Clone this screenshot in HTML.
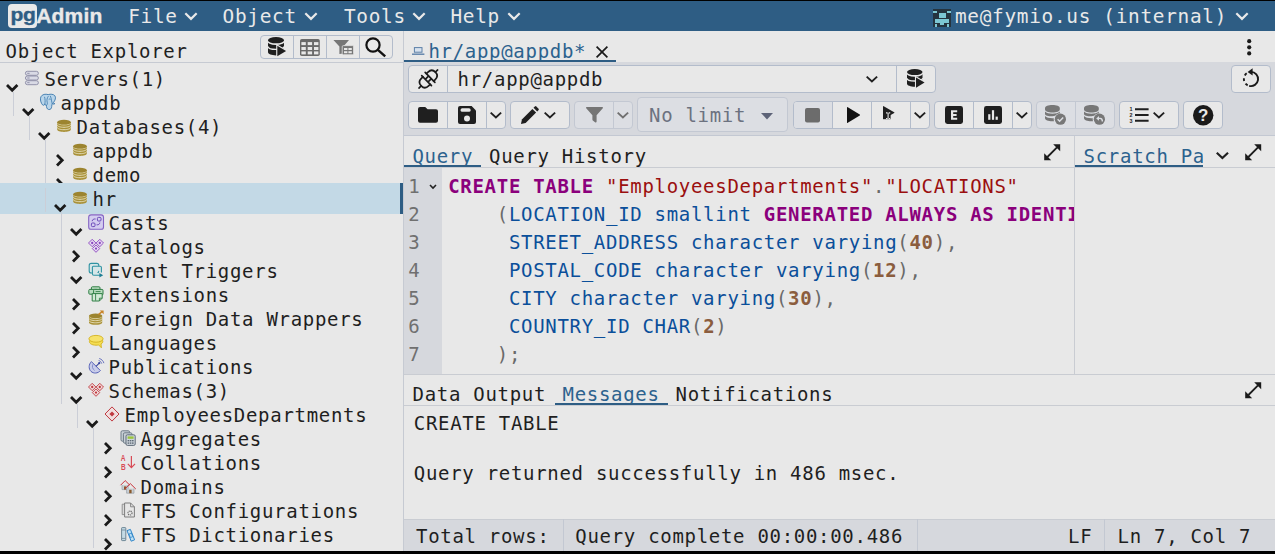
<!DOCTYPE html>
<html lang="en"><head><meta charset="utf-8"><title>pgAdmin 4</title>
<style>
*{box-sizing:border-box;margin:0;padding:0}
html,body{width:1275px;height:554px;overflow:hidden;background:#000}
body{position:relative;font-family:"DejaVu Sans Mono", "Liberation Mono", monospace;font-size:19px;letter-spacing:0.7px;color:#1f1f1f;line-height:1}
.abs{position:absolute}
.t{position:absolute;white-space:pre;line-height:24px;height:24px}
#hdr{position:absolute;left:0;top:1px;width:1275px;height:30px;background:#2e5d84}
#main{position:absolute;left:0;top:31px;width:1275px;height:520px;background:#e8e8e8}
.hm{position:absolute;top:1px;color:#e9e9e9;font-size:19.4px;letter-spacing:0.69px;white-space:pre;line-height:30px;height:30px}
svg{position:absolute;overflow:visible}
.vline{position:absolute;width:1px;background:#cbced7}
.hline{position:absolute;height:1px;background:#c9ccd2}
.btn{position:absolute;background:#e8e8e8;border:1px solid #b3bccb;border-radius:4px}
.btn.dis{background:#dcdee3;border-color:#c3c8d2}
.bdiv{position:absolute;width:1px;background:#b3bccb}
.kw{color:#8b007c;font-weight:bold}
.st{color:#9b0f0f}
.id{color:#0b4f9a}
.nu{color:#8b5d3e;font-weight:bold}
.pu{color:#6a6a6a}
</style></head>
<body>
<div id="hdr">
<div class="abs" style="left:7.7px;top:3px;width:29.5px;height:24px;background:#e9e9e9;border-radius:4px"></div>
<div class="abs" style="left:10.6px;top:0.5px;font-family:'Liberation Sans',sans-serif;font-weight:bold;font-size:21px;letter-spacing:-0.4px;line-height:26px;color:#2e5d84;white-space:pre;transform:scaleY(0.91);transform-origin:0 8px;-webkit-text-stroke:0.4px #2e5d84">pg</div>
<div class="abs" style="left:36.2px;top:1.6px;-webkit-text-stroke:0.35px #e9e9e9;font-family:'Liberation Sans',sans-serif;font-weight:bold;font-size:21px;letter-spacing:0.2px;line-height:26px;color:#e9e9e9;white-space:pre">Admin</div>
<div class="hm" style="left:128.2px">File</div>
<svg style="left:184.5px;top:12.4px" width="12" height="7" viewBox="0 0 12 7"><path d="M1.1 1.1 L6 5.9 L10.9 1.1" fill="none" stroke="#e9e9e9" stroke-width="2.2" stroke-linecap="square" stroke-linejoin="miter"/></svg>
<div class="hm" style="left:222.6px">Object</div>
<svg style="left:305.0px;top:12.4px" width="12" height="7" viewBox="0 0 12 7"><path d="M1.1 1.1 L6 5.9 L10.9 1.1" fill="none" stroke="#e9e9e9" stroke-width="2.2" stroke-linecap="square" stroke-linejoin="miter"/></svg>
<div class="hm" style="left:344px">Tools</div>
<svg style="left:413.0px;top:12.4px" width="12" height="7" viewBox="0 0 12 7"><path d="M1.1 1.1 L6 5.9 L10.9 1.1" fill="none" stroke="#e9e9e9" stroke-width="2.2" stroke-linecap="square" stroke-linejoin="miter"/></svg>
<div class="hm" style="left:450.5px">Help</div>
<svg style="left:508.0px;top:12.4px" width="12" height="7" viewBox="0 0 12 7"><path d="M1.1 1.1 L6 5.9 L10.9 1.1" fill="none" stroke="#e9e9e9" stroke-width="2.2" stroke-linecap="square" stroke-linejoin="miter"/></svg>
<div class="hm" style="left:955px">me@fymio.us (internal)</div>
<svg style="left:1236.0px;top:12.4px" width="12" height="7" viewBox="0 0 12 7"><path d="M1.1 1.1 L6 5.9 L10.9 1.1" fill="none" stroke="#e9e9e9" stroke-width="2.2" stroke-linecap="square" stroke-linejoin="miter"/></svg>
<svg style="left:933px;top:8px" width="18" height="18" viewBox="0 0 18 18" shape-rendering="crispEdges"><rect width="18" height="18" fill="#25343f"/><g fill="#7cc6d2"><rect x="0" y="2" width="4" height="1.5"/><rect x="14" y="2" width="4" height="1.5"/><rect x="5.5" y="3.5" width="7" height="5.5"/><rect x="2" y="9.5" width="14" height="4"/><rect x="7" y="13.5" width="4" height="2.5"/><rect x="2" y="14.5" width="2" height="3.5"/><rect x="14" y="14.5" width="2" height="3.5"/></g></svg>
</div>
<div id="main"></div>
<div class="t " style="left:5.50px;top:39.03px;">Object Explorer</div>
<div class="hline" style="left:0;top:62px;width:404px;background:#c6cad2"></div>
<div class="vline" style="left:403px;top:31px;height:520px;background:#c6cad2"></div>
<div class="btn" style="left:260px;top:35px;width:133px;height:24px"></div>
<div class="bdiv" style="left:293px;top:36px;height:22px"></div>
<div class="bdiv" style="left:326px;top:36px;height:22px"></div>
<div class="bdiv" style="left:359px;top:36px;height:22px"></div>
<div class="abs" style="left:0;top:63px;width:403px;height:488px;overflow:hidden">
<svg style="left:5.8px;top:20.7px" width="12.4" height="8.2" viewBox="0 0 12.4 8.2"><path d="M0.99 0.99L6.2 6.2L11.41 0.99" fill="none" stroke="#1a1a1a" stroke-width="2.8"/></svg>
<svg style="left:24px;top:7px" width="16" height="16" viewBox="0 0 16 16"><rect x="1.4" y="1.3" width="13" height="4" rx="2" fill="#d9dae5" stroke="#8a8aa4" stroke-width="0.9"/><rect x="3.2" y="2.85" width="2.4" height="0.9" fill="#8a8aa4"/><rect x="1.4" y="6" width="13" height="4" rx="2" fill="#d9dae5" stroke="#8a8aa4" stroke-width="0.9"/><rect x="3.2" y="7.55" width="2.4" height="0.9" fill="#8a8aa4"/><rect x="1.4" y="10.7" width="13" height="4" rx="2" fill="#d9dae5" stroke="#8a8aa4" stroke-width="0.9"/><rect x="3.2" y="12.25" width="2.4" height="0.9" fill="#8a8aa4"/></svg>
<div class="t " style="left:44.60px;top:4.03px;">Servers(1)</div>
<div class="vline" style="left:13px;top:29px;height:24px"></div>
<svg style="left:21.8px;top:44.7px" width="12.4" height="8.2" viewBox="0 0 12.4 8.2"><path d="M0.99 0.99L6.2 6.2L11.41 0.99" fill="none" stroke="#1a1a1a" stroke-width="2.8"/></svg>
<svg style="left:40px;top:31px" width="16" height="16" viewBox="0 0 16 16"><path d="M8.2 0.6C5.6 -0.2 2.2 0.2 0.9 2.8C-0.2 5.2 0.9 9.2 2.6 10.9C3.6 11.8 4.6 11 4.9 9.9C5.2 11 5.8 11.6 6.5 11.4C6.4 13 6.8 15.2 8.6 15.5C10.6 15.8 11.6 14.6 11.7 12.4C11.8 11.2 12 10.2 12.2 9.6C13 10.4 14.4 10.2 15 9.4C13.9 9.6 13.3 9.3 13.3 8.7C15.3 6.4 16.2 3.4 14.8 1.7C13.4 0.1 10.6 -0.1 8.2 0.6Z" fill="#b9d5ea" stroke="#3b78ad" stroke-width="0.9" stroke-linejoin="round"/><path d="M4.9 9.9C5.3 7.6 5.2 5.2 4.6 3.2M6.5 11.4C7.4 10.6 7.6 9.4 7.2 8.2C6.6 6.4 7 4 8.2 2.4M12.2 9.6C11.4 7.8 11.6 4.6 10.4 2.2M9 5.2C9.4 4.8 10 4.9 10.2 5.3" fill="none" stroke="#3b78ad" stroke-width="0.8" stroke-linecap="round"/></svg>
<div class="t " style="left:60.60px;top:28.03px;">appdb</div>
<div class="vline" style="left:29px;top:53px;height:24px"></div>
<svg style="left:37.8px;top:68.7px" width="12.4" height="8.2" viewBox="0 0 12.4 8.2"><path d="M0.99 0.99L6.2 6.2L11.41 0.99" fill="none" stroke="#1a1a1a" stroke-width="2.8"/></svg>
<svg style="left:56px;top:55px" width="16" height="16" viewBox="0 0 16 16"><path d="M1.2 4.2V11.6C1.2 13 4.3 14 8 14S14.8 13 14.8 11.6V4.2Z" fill="#a99138"/><path d="M1.2 4.4C1.2 5.8 4.3 6.9 8 6.9S14.8 5.8 14.8 4.4M1.2 6.9C1.2 8.3 4.3 9.3 8 9.3S14.8 8.3 14.8 6.9M1.2 9.3C1.2 10.7 4.3 11.7 8 11.7S14.8 10.7 14.8 9.3" fill="none" stroke="#e9e3c3" stroke-width="0.9"/><ellipse cx="8" cy="4.2" rx="6.8" ry="2.4" fill="#9c842f"/></svg>
<div class="t " style="left:76.60px;top:52.03px;">Databases(4)</div>
<div class="vline" style="left:45px;top:77px;height:24px"></div>
<svg style="left:55.9px;top:90.7px" width="8.2" height="12.4" viewBox="0 0 8.2 12.4"><path d="M0.99 0.99L6.2 6.2L0.99 11.41" fill="none" stroke="#1a1a1a" stroke-width="2.8"/></svg>
<svg style="left:72px;top:79px" width="16" height="16" viewBox="0 0 16 16"><path d="M1.2 4.2V11.6C1.2 13 4.3 14 8 14S14.8 13 14.8 11.6V4.2Z" fill="#a99138"/><path d="M1.2 4.4C1.2 5.8 4.3 6.9 8 6.9S14.8 5.8 14.8 4.4M1.2 6.9C1.2 8.3 4.3 9.3 8 9.3S14.8 8.3 14.8 6.9M1.2 9.3C1.2 10.7 4.3 11.7 8 11.7S14.8 10.7 14.8 9.3" fill="none" stroke="#e9e3c3" stroke-width="0.9"/><ellipse cx="8" cy="4.2" rx="6.8" ry="2.4" fill="#9c842f"/></svg>
<div class="t " style="left:92.60px;top:76.03px;">appdb</div>
<div class="vline" style="left:45px;top:101px;height:24px"></div>
<svg style="left:55.9px;top:114.7px" width="8.2" height="12.4" viewBox="0 0 8.2 12.4"><path d="M0.99 0.99L6.2 6.2L0.99 11.41" fill="none" stroke="#1a1a1a" stroke-width="2.8"/></svg>
<svg style="left:72px;top:103px" width="16" height="16" viewBox="0 0 16 16"><path d="M1.2 4.2V11.6C1.2 13 4.3 14 8 14S14.8 13 14.8 11.6V4.2Z" fill="#a99138"/><path d="M1.2 4.4C1.2 5.8 4.3 6.9 8 6.9S14.8 5.8 14.8 4.4M1.2 6.9C1.2 8.3 4.3 9.3 8 9.3S14.8 8.3 14.8 6.9M1.2 9.3C1.2 10.7 4.3 11.7 8 11.7S14.8 10.7 14.8 9.3" fill="none" stroke="#e9e3c3" stroke-width="0.9"/><ellipse cx="8" cy="4.2" rx="6.8" ry="2.4" fill="#9c842f"/></svg>
<div class="t " style="left:92.60px;top:100.03px;">demo</div>
<div class="abs" style="left:0;top:120px;width:403px;height:31px;background:#c3d9e6"></div>
<div class="abs" style="left:400px;top:120px;width:3px;height:31px;background:#2e5d84"></div>
<div class="vline" style="left:45px;top:125px;height:24px"></div>
<svg style="left:53.8px;top:140.7px" width="12.4" height="8.2" viewBox="0 0 12.4 8.2"><path d="M0.99 0.99L6.2 6.2L11.41 0.99" fill="none" stroke="#1a1a1a" stroke-width="2.8"/></svg>
<svg style="left:72px;top:127px" width="16" height="16" viewBox="0 0 16 16"><path d="M1.2 4.2V11.6C1.2 13 4.3 14 8 14S14.8 13 14.8 11.6V4.2Z" fill="#a99138"/><path d="M1.2 4.4C1.2 5.8 4.3 6.9 8 6.9S14.8 5.8 14.8 4.4M1.2 6.9C1.2 8.3 4.3 9.3 8 9.3S14.8 8.3 14.8 6.9M1.2 9.3C1.2 10.7 4.3 11.7 8 11.7S14.8 10.7 14.8 9.3" fill="none" stroke="#e9e3c3" stroke-width="0.9"/><ellipse cx="8" cy="4.2" rx="6.8" ry="2.4" fill="#9c842f"/></svg>
<div class="t " style="left:92.60px;top:124.03px;">hr</div>
<div class="vline" style="left:61px;top:149px;height:24px"></div>
<svg style="left:69.8px;top:164.7px" width="12.4" height="8.2" viewBox="0 0 12.4 8.2"><path d="M0.99 0.99L6.2 6.2L11.41 0.99" fill="none" stroke="#1a1a1a" stroke-width="2.8"/></svg>
<svg style="left:88px;top:151px" width="16" height="16" viewBox="0 0 16 16"><rect x="0.7" y="0.9" width="14.8" height="14.4" rx="2.4" fill="#d4cdf0" stroke="#8363c4" stroke-width="1.1"/><rect x="9.4" y="3.4" width="3.6" height="3.6" rx="1" fill="none" stroke="#6a48b8" stroke-width="1"/><rect x="3.4" y="9" width="3.6" height="3.6" rx="1" fill="none" stroke="#6a48b8" stroke-width="1"/><path d="M4.2 7.2C4.4 5.4 5.6 4.8 7.6 5M11.8 8.6C11.6 10.4 10.4 11 8.6 10.8" fill="none" stroke="#6a48b8" stroke-width="1"/></svg>
<div class="t " style="left:108.60px;top:148.03px;">Casts</div>
<div class="vline" style="left:61px;top:173px;height:24px"></div>
<svg style="left:71.9px;top:186.7px" width="8.2" height="12.4" viewBox="0 0 8.2 12.4"><path d="M0.99 0.99L6.2 6.2L0.99 11.41" fill="none" stroke="#1a1a1a" stroke-width="2.8"/></svg>
<svg style="left:88px;top:175px" width="16" height="16" viewBox="0 0 16 16"><path d="M4.2 1.3L7.9 5L4.2 8.7L0.5 5Z" fill="#e6d8f2" stroke="#8b46c0" stroke-width="0.9"/><circle cx="4.2" cy="5" r="1.15" fill="#8b46c0"/><path d="M11.8 1.3L15.5 5L11.8 8.7L8.1 5Z" fill="#e6d8f2" stroke="#8b46c0" stroke-width="0.9"/><circle cx="11.8" cy="5" r="1.15" fill="#8b46c0"/><path d="M8 6.9L11.7 10.6L8 14.3L4.3 10.6Z" fill="#e6d8f2" stroke="#8b46c0" stroke-width="0.9"/><circle cx="8" cy="10.6" r="1.15" fill="#8b46c0"/></svg>
<div class="t " style="left:108.60px;top:172.03px;">Catalogs</div>
<div class="vline" style="left:61px;top:197px;height:24px"></div>
<svg style="left:69.8px;top:212.7px" width="12.4" height="8.2" viewBox="0 0 12.4 8.2"><path d="M0.99 0.99L6.2 6.2L11.41 0.99" fill="none" stroke="#1a1a1a" stroke-width="2.8"/></svg>
<svg style="left:88px;top:199px" width="16" height="16" viewBox="0 0 16 16"><rect x="1.2" y="1.4" width="9.6" height="9.6" rx="2" fill="#d6e6e8" stroke="#2f93a3" stroke-width="1.1"/><path d="M4.4 5.2Q4.4 4.2 5.4 4.2H12.2Q13.4 4.2 13.4 5.4V10.4M4.4 5.2V11.8Q4.4 13.2 5.8 13.2H12" fill="#d6e6e8" stroke="#2f93a3" stroke-width="1.1"/><path d="M11.4 11L15.2 13.2L11.4 15.4Z" fill="#1f7f95"/></svg>
<div class="t " style="left:108.60px;top:196.03px;">Event Triggers</div>
<div class="vline" style="left:61px;top:221px;height:24px"></div>
<svg style="left:71.9px;top:234.7px" width="8.2" height="12.4" viewBox="0 0 8.2 12.4"><path d="M0.99 0.99L6.2 6.2L0.99 11.41" fill="none" stroke="#1a1a1a" stroke-width="2.8"/></svg>
<svg style="left:88px;top:223px" width="16" height="16" viewBox="0 0 16 16"><rect x="3.4" y="0.8" width="8.6" height="4.6" rx="1" fill="#b9dcc0" stroke="#2f7f45" stroke-width="1"/><rect x="0.8" y="3.4" width="8.6" height="4.8" rx="1" fill="#b9dcc0" stroke="#2f7f45" stroke-width="1"/><rect x="5.6" y="3.4" width="9.4" height="5.6" rx="1" fill="#b9dcc0" stroke="#2f7f45" stroke-width="1"/><path d="M4.2 7.6H14.2V12.2L11.4 15H4.2Z" fill="#d3ead7" stroke="#2f7f45" stroke-width="1" stroke-linejoin="round"/><path d="M7.6 5.6H12.6M7.6 7.8V14.6M11.4 15V12.2H14.2" fill="none" stroke="#2f7f45" stroke-width="0.9"/></svg>
<div class="t " style="left:108.60px;top:220.03px;">Extensions</div>
<div class="vline" style="left:61px;top:245px;height:24px"></div>
<svg style="left:71.9px;top:258.7px" width="8.2" height="12.4" viewBox="0 0 8.2 12.4"><path d="M0.99 0.99L6.2 6.2L0.99 11.41" fill="none" stroke="#1a1a1a" stroke-width="2.8"/></svg>
<svg style="left:88px;top:247px" width="16" height="16" viewBox="0 0 16 16"><path d="M1 5.8V12.4C1 13.8 4 14.8 7.6 14.8S14.2 13.8 14.2 12.4V5.8Z" fill="#a99138"/><path d="M1 6C1 7.4 4 8.4 7.6 8.4S14.2 7.4 14.2 6M1 8.3C1 9.7 4 10.6 7.6 10.6S14.2 9.7 14.2 8.3M1 10.5C1 11.9 4 12.8 7.6 12.8S14.2 11.9 14.2 10.5" fill="none" stroke="#e9e3c3" stroke-width="0.85"/><ellipse cx="7.6" cy="5.8" rx="6.6" ry="2.3" fill="#9c842f"/><path d="M10.4 4.6L14.4 1.4" stroke="#c98528" stroke-width="1.4"/><path d="M11.8 0.4H15.6V4.2Z" fill="#c98528"/></svg>
<div class="t " style="left:108.60px;top:244.03px;">Foreign Data Wrappers</div>
<div class="vline" style="left:61px;top:269px;height:24px"></div>
<svg style="left:71.9px;top:282.7px" width="8.2" height="12.4" viewBox="0 0 8.2 12.4"><path d="M0.99 0.99L6.2 6.2L0.99 11.41" fill="none" stroke="#1a1a1a" stroke-width="2.8"/></svg>
<svg style="left:88px;top:271px" width="16" height="16" viewBox="0 0 16 16"><path d="M1.6 6.6C0.6 9 3.4 11.2 8 11.2C9 11.2 9.8 11.1 10.6 10.9L13.4 13.8L13 10C14.8 9 15.2 7.6 14.6 6.4Z" fill="#f4dd52" stroke="#d4b21f" stroke-width="0.9" stroke-linejoin="round"/><ellipse cx="8" cy="4.8" rx="7.1" ry="3.4" fill="#f6e26a" stroke="#d4b21f" stroke-width="0.9"/></svg>
<div class="t " style="left:108.60px;top:268.03px;">Languages</div>
<div class="vline" style="left:61px;top:293px;height:24px"></div>
<svg style="left:69.8px;top:308.7px" width="12.4" height="8.2" viewBox="0 0 12.4 8.2"><path d="M0.99 0.99L6.2 6.2L11.41 0.99" fill="none" stroke="#1a1a1a" stroke-width="2.8"/></svg>
<svg style="left:88px;top:295px" width="16" height="16" viewBox="0 0 16 16"><path d="M3.4 3.6C0.6 6.4 0.4 10.8 3 13.4C5.6 15.8 9.8 15.6 12.4 12.6Z" fill="#c9cdea" stroke="#5762b8" stroke-width="1" stroke-linejoin="round"/><path d="M5 6.2C3.8 8.2 4.4 11 6.6 12.4" fill="none" stroke="#7a83c8" stroke-width="0.9"/><path d="M8 8.4L11 5.4" stroke="#3a45a0" stroke-width="1.1"/><circle cx="11.2" cy="5.2" r="1.1" fill="#3a45a0"/><path d="M11 2.6C12.2 3 13.2 4 13.6 5.2M11.6 0.6C13.6 1.2 15.2 2.8 15.8 4.8" fill="none" stroke="#5762b8" stroke-width="0.9" stroke-linecap="round"/></svg>
<div class="t " style="left:108.60px;top:292.03px;">Publications</div>
<div class="vline" style="left:61px;top:317px;height:24px"></div>
<svg style="left:69.8px;top:332.7px" width="12.4" height="8.2" viewBox="0 0 12.4 8.2"><path d="M0.99 0.99L6.2 6.2L11.41 0.99" fill="none" stroke="#1a1a1a" stroke-width="2.8"/></svg>
<svg style="left:88px;top:319px" width="16" height="16" viewBox="0 0 16 16"><path d="M4.2 1.3L7.9 5L4.2 8.7L0.5 5Z" fill="#f0d8d8" stroke="#c0393f" stroke-width="0.9"/><circle cx="4.2" cy="5" r="1.15" fill="#c0393f"/><path d="M11.8 1.3L15.5 5L11.8 8.7L8.1 5Z" fill="#f0d8d8" stroke="#c0393f" stroke-width="0.9"/><circle cx="11.8" cy="5" r="1.15" fill="#c0393f"/><path d="M8 6.9L11.7 10.6L8 14.3L4.3 10.6Z" fill="#f0d8d8" stroke="#c0393f" stroke-width="0.9"/><circle cx="8" cy="10.6" r="1.15" fill="#c0393f"/></svg>
<div class="t " style="left:108.60px;top:316.03px;">Schemas(3)</div>
<div class="vline" style="left:77px;top:341px;height:24px"></div>
<svg style="left:85.8px;top:356.7px" width="12.4" height="8.2" viewBox="0 0 12.4 8.2"><path d="M0.99 0.99L6.2 6.2L11.41 0.99" fill="none" stroke="#1a1a1a" stroke-width="2.8"/></svg>
<svg style="left:104px;top:343px" width="16" height="16" viewBox="0 0 16 16"><path d="M8 0.9L15 8L8 15.1L1 8Z" fill="#f1dede" stroke="#c0393f" stroke-width="1"/><path d="M8 5.4L10.6 8L8 10.6L5.4 8Z" fill="#c0393f"/></svg>
<div class="t " style="left:124.60px;top:340.03px;">EmployeesDepartments</div>
<div class="vline" style="left:93px;top:365px;height:24px"></div>
<svg style="left:103.9px;top:378.7px" width="8.2" height="12.4" viewBox="0 0 8.2 12.4"><path d="M0.99 0.99L6.2 6.2L0.99 11.41" fill="none" stroke="#1a1a1a" stroke-width="2.8"/></svg>
<svg style="left:120px;top:367px" width="16" height="16" viewBox="0 0 16 16"><rect x="1" y="0.8" width="8.6" height="10.4" rx="1.4" fill="#c8d0d6" stroke="#6d7a86" stroke-width="1"/><rect x="3.4" y="2.8" width="8.6" height="10.4" rx="1.4" fill="#c8d0d6" stroke="#6d7a86" stroke-width="1"/><rect x="6" y="4.8" width="9.2" height="10.6" rx="1.4" fill="#cfd6dc" stroke="#5f6b78" stroke-width="1"/><rect x="7.6" y="6.4" width="6" height="2.4" fill="#9bc63c"/><g fill="#5f6b78"><rect x="7.6" y="10" width="1.6" height="1.4"/><rect x="9.8" y="10" width="1.6" height="1.4"/><rect x="12" y="10" width="1.6" height="1.4"/><rect x="7.6" y="12.4" width="1.6" height="1.4"/><rect x="9.8" y="12.4" width="1.6" height="1.4"/><rect x="12" y="12.4" width="1.6" height="1.4"/></g></svg>
<div class="t " style="left:140.60px;top:364.03px;">Aggregates</div>
<div class="vline" style="left:93px;top:389px;height:24px"></div>
<svg style="left:103.9px;top:402.7px" width="8.2" height="12.4" viewBox="0 0 8.2 12.4"><path d="M0.99 0.99L6.2 6.2L0.99 11.41" fill="none" stroke="#1a1a1a" stroke-width="2.8"/></svg>
<svg style="left:120px;top:391px" width="16" height="16" viewBox="0 0 16 16"><text x="1" y="7.2" font-family="'Liberation Sans',sans-serif" font-weight="bold" font-size="8.4" letter-spacing="0" fill="#d84a55" transform="scale(0.78 1)">A</text><text x="1.2" y="15.6" font-family="'Liberation Sans',sans-serif" font-weight="bold" font-size="8.4" letter-spacing="0" fill="#d84a55" transform="scale(0.78 1)">B</text><path d="M11.4 2V13.4M7.8 9.8L11.4 13.6L15 9.8" fill="none" stroke="#d84a55" stroke-width="1.2"/></svg>
<div class="t " style="left:140.60px;top:388.03px;">Collations</div>
<div class="vline" style="left:93px;top:413px;height:24px"></div>
<svg style="left:103.9px;top:426.7px" width="8.2" height="12.4" viewBox="0 0 8.2 12.4"><path d="M0.99 0.99L6.2 6.2L0.99 11.41" fill="none" stroke="#1a1a1a" stroke-width="2.8"/></svg>
<svg style="left:120px;top:415px" width="16" height="16" viewBox="0 0 16 16"><path d="M2 7V11.6H8.2V7" fill="#c9cfd4" stroke="#8a949c" stroke-width="0.6"/><path d="M0.6 7.2L5.2 2.6L9.8 7.2" fill="none" stroke="#c8323a" stroke-width="1"/><rect x="4" y="8.4" width="2.2" height="3.2" fill="#8a5a2b"/><path d="M6.6 10.6V15.2H14V10.6" fill="#c9cfd4" stroke="#8a949c" stroke-width="0.6"/><path d="M4.8 11L10.3 5.6L15.8 11" fill="none" stroke="#c8323a" stroke-width="1"/><rect x="9.2" y="11.8" width="2.4" height="3.4" fill="#8a5a2b"/></svg>
<div class="t " style="left:140.60px;top:412.03px;">Domains</div>
<div class="vline" style="left:93px;top:437px;height:24px"></div>
<svg style="left:103.9px;top:450.7px" width="8.2" height="12.4" viewBox="0 0 8.2 12.4"><path d="M0.99 0.99L6.2 6.2L0.99 11.41" fill="none" stroke="#1a1a1a" stroke-width="2.8"/></svg>
<svg style="left:120px;top:439px" width="16" height="16" viewBox="0 0 16 16"><path d="M2.2 2.2H7.4V12.6H2.2Z" fill="#d9d9d9" stroke="#8a8a8a" stroke-width="0.9"/><path d="M4.6 1H10.6L14.4 4.8V15H4.6Z" fill="#e6e6e6" stroke="#7d7d7d" stroke-width="1" stroke-linejoin="round"/><path d="M10.6 1V4.8H14.4" fill="none" stroke="#7d7d7d" stroke-width="0.9"/><circle cx="10" cy="11" r="2" fill="none" stroke="#6a6a6a" stroke-width="1.2" stroke-dasharray="1.1 0.7"/></svg>
<div class="t " style="left:140.60px;top:436.03px;">FTS Configurations</div>
<div class="vline" style="left:93px;top:461px;height:24px"></div>
<svg style="left:103.9px;top:474.7px" width="8.2" height="12.4" viewBox="0 0 8.2 12.4"><path d="M0.99 0.99L6.2 6.2L0.99 11.41" fill="none" stroke="#1a1a1a" stroke-width="2.8"/></svg>
<svg style="left:120px;top:463px" width="16" height="16" viewBox="0 0 16 16"><rect x="1.6" y="1.6" width="4.2" height="13" rx="0.6" fill="#c4dbe6" stroke="#6f8796" stroke-width="1"/><path d="M1.8 4H5.6M1.8 12.4H5.6" stroke="#6f8796" stroke-width="0.8"/><path d="M7 4.6L10.4 3.4L14.6 13.8L11.2 15.2Z" fill="#bfe0f4" stroke="#2f86c9" stroke-width="1" stroke-linejoin="round"/><path d="M9 8L11.4 7L12.8 10.6L10.4 11.6Z" fill="none" stroke="#2f86c9" stroke-width="0.8"/></svg>
<div class="t " style="left:140.60px;top:460.03px;">FTS Dictionaries</div>
</div>
<div class="abs" style="left:404px;top:31px;width:871px;height:31px;background:#e8e8e8"></div>
<div class="t " style="left:428.40px;top:38.63px;color:#2c628e">hr/app@appdb*</div>
<div class="abs" style="left:404px;top:59.6px;width:212px;height:2.2px;background:#2e5d84"></div>
<div class="abs" style="left:404px;top:62px;width:871px;height:74px;background:#d6d8dd"></div>
<div class="hline" style="left:404px;top:135px;width:871px;background:#c3c8d2"></div>
<div class="btn" style="left:408px;top:65px;width:528px;height:28px"></div>
<div class="bdiv" style="left:447px;top:66px;height:26px"></div>
<div class="bdiv" style="left:896px;top:66px;height:26px"></div>
<div class="t " style="left:457.60px;top:67.03px;">hr/app@appdb</div>
<div class="btn" style="left:1231px;top:65px;width:40px;height:28px"></div>
<div class="btn" style="left:408px;top:101px;width:98px;height:28px"></div>
<div class="bdiv" style="left:447px;top:102px;height:26px"></div>
<div class="bdiv" style="left:486px;top:102px;height:26px"></div>
<div class="btn" style="left:510px;top:101px;width:60px;height:28px"></div>
<div class="btn dis" style="left:574px;top:101px;width:59px;height:28px"></div>
<div class="bdiv" style="left:613px;top:102px;height:26px;background:#c3c8d2"></div>
<div class="btn dis" style="left:637px;top:97px;width:151px;height:35px"></div>
<div class="t " style="left:649.00px;top:102.93px;color:#6c7280">No limit</div>
<svg style="left:761px;top:112.5px" width="12" height="6.4" viewBox="0 0 12 6.4"><path d="M0 0H12L6 6.4Z" fill="#5d6378"/></svg>
<div class="btn" style="left:793px;top:101px;width:137px;height:28px"></div>
<div class="abs" style="left:794px;top:102px;width:38px;height:26px;background:#dcdee3;border-radius:3px 0 0 3px"></div>
<div class="bdiv" style="left:832px;top:102px;height:26px"></div>
<div class="bdiv" style="left:871px;top:102px;height:26px"></div>
<div class="bdiv" style="left:910px;top:102px;height:26px"></div>
<div class="btn" style="left:934px;top:101px;width:98px;height:28px"></div>
<div class="bdiv" style="left:973px;top:102px;height:26px"></div>
<div class="bdiv" style="left:1012px;top:102px;height:26px"></div>
<div class="btn dis" style="left:1036px;top:101px;width:79px;height:28px"></div>
<div class="bdiv" style="left:1075px;top:102px;height:26px;background:#c3c8d2"></div>
<div class="btn" style="left:1119px;top:101px;width:60px;height:28px"></div>
<div class="btn" style="left:1183px;top:101px;width:40px;height:28px"></div>
<svg style="left:268px;top:37.3px" width="18.2" height="19.6" viewBox="0 0 18.2 19.6"><path d="M0 3.15V15.3C0 17 3.6 18.4 8 18.4S16 17 16 15.3V3.15Z" fill="#1f1f1f"/><path d="M-0.3 9.3C0 11 3.6 12.4 8 12.4S16 11 16.3 9.3" fill="none" stroke="#e8e8e8" stroke-width="1.4"/><ellipse cx="8" cy="3.4" rx="9.4" ry="4.6" fill="#e8e8e8"/><ellipse cx="8" cy="3.15" rx="8" ry="3.15" fill="#1f1f1f"/><path d="M9.3 19.6L18.6 14V20Z" fill="#e8e8e8"/><path d="M9.3 8.8L18.1 14L9.3 19.3Z" fill="#1f1f1f" stroke="#e8e8e8" stroke-width="2.2" paint-order="stroke"/></svg>
<svg style="left:300.1px;top:39px" width="19.8" height="17" viewBox="0 0 19.8 17"><rect x="0" y="0" width="19.8" height="17" rx="1.8" fill="#6a6a6a"/><rect x="1.4" y="3.1" width="4.4" height="3" fill="#e8e8e8"/><rect x="7.7" y="3.1" width="4.4" height="3" fill="#e8e8e8"/><rect x="14" y="3.1" width="4.4" height="3" fill="#e8e8e8"/><rect x="1.4" y="8" width="4.4" height="3" fill="#e8e8e8"/><rect x="7.7" y="8" width="4.4" height="3" fill="#e8e8e8"/><rect x="14" y="8" width="4.4" height="3" fill="#e8e8e8"/><rect x="1.4" y="12.4" width="4.4" height="3" fill="#e8e8e8"/><rect x="7.7" y="12.4" width="4.4" height="3" fill="#e8e8e8"/><rect x="14" y="12.4" width="4.4" height="3" fill="#e8e8e8"/></svg>
<svg style="left:332.6px;top:39.6px" width="21" height="15" viewBox="0 0 21 15"><path d="M0.4 0H16L10.4 6.6V13.4L6.4 14V6.6Z" fill="#777"/><rect x="9.2" y="5.6" width="11.4" height="9.2" rx="1.2" fill="#777" stroke="#e8e8e8" stroke-width="0.8"/><g fill="#e8e8e8"><rect x="11" y="8" width="3.4" height="2"/><rect x="15.4" y="8" width="3.4" height="2"/><rect x="11" y="11.2" width="3.4" height="2"/><rect x="15.4" y="11.2" width="3.4" height="2"/></g></svg>
<svg style="left:365px;top:37px" width="21" height="20" viewBox="0 0 21 20"><circle cx="8" cy="8" r="6.6" fill="none" stroke="#111" stroke-width="2.2"/><path d="M12.6 12.6L20.2 19.4" stroke="#111" stroke-width="2.4"/></svg>
<svg style="left:411.6px;top:47px" width="12.4" height="8" viewBox="0 0 12.4 8"><rect x="2.4" y="0.6" width="7.6" height="4.6" fill="#d8e2ee" stroke="#5b7fa8" stroke-width="1"/><path d="M0 7.2H12.4" stroke="#5b7fa8" stroke-width="1.4"/></svg>
<svg style="left:596px;top:46px" width="12" height="12" viewBox="0 0 12 12"><path d="M0.6 0.6L11.4 11.4M11.4 0.6L0.6 11.4" stroke="#1a1a1a" stroke-width="1.7"/></svg>
<svg style="left:1246.7px;top:38.7px" width="4.4" height="16.6" viewBox="0 0 4.4 16.6"><circle cx="2.2" cy="2.2" r="2.1" fill="#1a1a1a"/><circle cx="2.2" cy="8.3" r="2.1" fill="#1a1a1a"/><circle cx="2.2" cy="14.4" r="2.1" fill="#1a1a1a"/></svg>
<svg style="left:417.7px;top:68.9px" width="20.6" height="20" viewBox="0 0 20.6 20"><g transform="translate(10.3 10) rotate(-44)" fill="none" stroke="#1a1a1a" stroke-width="1.7" stroke-linecap="round"><path d="M-2.4 -5.2H-4.6C-8 -5.2 -9.9 -3 -9.9 0C-9.9 3 -8 5.2 -4.6 5.2H-2.4"/><path d="M2.4 -5.2H4.6C8 -5.2 9.9 -3 9.9 0C9.9 3 8 5.2 4.6 5.2H2.4"/><path d="M-2.4 -7V7M2.4 -7V7M-2.4 -1.9H2.4M-2.4 1.9H2.4M-9.9 0H-13M9.9 0H13"/></g></svg>
<svg style="left:866.0px;top:76.0px" width="11.8" height="6.9" viewBox="0 0 11.8 6.9"><path d="M0.665 0.665 L5.9 5.57 L11.135 0.665" fill="none" stroke="#1f1f1f" stroke-width="1.9" stroke-linecap="butt" stroke-linejoin="miter"/></svg>
<svg style="left:907.2px;top:69.2px" width="17.654" height="19.012" viewBox="0 0 18.2 19.6"><path d="M0 3.15V15.3C0 17 3.6 18.4 8 18.4S16 17 16 15.3V3.15Z" fill="#1f1f1f"/><path d="M-0.3 9.3C0 11 3.6 12.4 8 12.4S16 11 16.3 9.3" fill="none" stroke="#e8e8e8" stroke-width="1.4"/><ellipse cx="8" cy="3.4" rx="9.4" ry="4.6" fill="#e8e8e8"/><ellipse cx="8" cy="3.15" rx="8" ry="3.15" fill="#1f1f1f"/><path d="M9.3 19.6L18.6 14V20Z" fill="#e8e8e8"/><path d="M9.3 8.8L18.1 14L9.3 19.3Z" fill="#1f1f1f" stroke="#e8e8e8" stroke-width="2.2" paint-order="stroke"/></svg>
<svg style="left:1241.1px;top:67px" width="20" height="22" viewBox="0 0 20 22"><path d="M10.00 4.90A7.1 7.1 0 1 1 8.16 18.86" fill="none" stroke="#1a1a1a" stroke-width="1.9"/><path d="M8.16 18.86A7.1 7.1 0 0 1 8.16 5.14" fill="none" stroke="#1a1a1a" stroke-width="1.9" stroke-dasharray="2.7 2.9" stroke-dashoffset="-1.6"/><path d="M6.6 4.9L11.6 1.3V8.5Z" fill="#1a1a1a"/></svg>
<svg style="left:418px;top:107px" width="20" height="16" viewBox="0 0 20 16"><path d="M2 0H7.2L9.6 2.2H18Q20 2.2 20 4.2V13.8Q20 15.8 18 15.8H2Q0 15.8 0 13.8V2Q0 0 2 0Z" fill="#1f1f1f"/></svg>
<svg style="left:458px;top:106px" width="18" height="18" viewBox="0 0 18 18"><path d="M2 0H13.6L18 4.4V16Q18 18 16 18H2Q0 18 0 16V2Q0 0 2 0Z" fill="#1f1f1f"/><rect x="2.6" y="2.2" width="10" height="3.6" rx="1.6" fill="#e8e8e8"/><circle cx="9" cy="12.6" r="3" fill="#e8e8e8"/></svg>
<svg style="left:490.1px;top:112.0px" width="11.8" height="6.9" viewBox="0 0 11.8 6.9"><path d="M0.665 0.665 L5.9 5.57 L11.135 0.665" fill="none" stroke="#1f1f1f" stroke-width="1.9" stroke-linecap="butt" stroke-linejoin="miter"/></svg>
<svg style="left:520.6px;top:106px" width="18" height="18" viewBox="0 0 18 18"><path d="M0 18L0.9 13.4L11.4 2.9L15.1 6.6L4.6 17.1Z" fill="#1f1f1f"/><path d="M12.5 1.8L13.9 0.4Q14.6 -0.2 15.3 0.4L17.6 2.7Q18.2 3.4 17.6 4.1L16.2 5.5Z" fill="#1f1f1f"/></svg>
<svg style="left:544.4px;top:112.0px" width="11.8" height="6.9" viewBox="0 0 11.8 6.9"><path d="M0.665 0.665 L5.9 5.57 L11.135 0.665" fill="none" stroke="#1f1f1f" stroke-width="1.9" stroke-linecap="butt" stroke-linejoin="miter"/></svg>
<svg style="left:585.5px;top:107px" width="17" height="16" viewBox="0 0 17 16"><path d="M0.6 0H16.4Q17.4 0.2 16.8 1.2L10.6 8.2V14.6Q10.4 15.8 9.4 15.4L6.8 13.6Q6.4 13.2 6.4 12.6V8.2L0.2 1.2Q-0.4 0.2 0.6 0Z" fill="#757575"/></svg>
<svg style="left:617.0px;top:112.0px" width="11.8" height="6.9" viewBox="0 0 11.8 6.9"><path d="M0.665 0.665 L5.9 5.57 L11.135 0.665" fill="none" stroke="#707070" stroke-width="1.9" stroke-linecap="butt" stroke-linejoin="miter"/></svg>
<svg style="left:805.4px;top:107.6px" width="15" height="15" viewBox="0 0 15 15"><rect width="15" height="14.6" rx="2" fill="#6c6c6c"/></svg>
<svg style="left:846.8px;top:107px" width="13.2" height="16" viewBox="0 0 13.2 16"><path d="M0 0.6Q0 -0.2 0.8 0.2L12.8 7.6Q13.4 8 12.8 8.4L0.8 15.8Q0 16.2 0 15.4Z" fill="#111"/></svg>
<svg style="left:882.5px;top:105.8px" width="11.8" height="13.4" viewBox="0 0 11.8 13.4"><path d="M0 0.5Q0 -0.2 0.7 0.2L11.2 6.2Q11.8 6.6 11.2 7L0.7 13Q0 13.4 0 12.7Z" fill="#1f1f1f"/><rect x="0.4" y="5.6" width="7.2" height="7.6" fill="#1f1f1f"/><path d="M3 6.9H4.6M5.6 6.9H7.2M5.1 7.2V12.2M3 12.5H4.6M5.6 12.5H7.2" stroke="#e8e8e8" stroke-width="1.1" fill="none"/></svg>
<svg style="left:914.2px;top:112.0px" width="11.8" height="6.9" viewBox="0 0 11.8 6.9"><path d="M0.665 0.665 L5.9 5.57 L11.135 0.665" fill="none" stroke="#1f1f1f" stroke-width="1.9" stroke-linecap="butt" stroke-linejoin="miter"/></svg>
<svg style="left:945px;top:106px" width="18" height="18" viewBox="0 0 18 18"><rect width="18" height="18" rx="2.4" fill="#1f1f1f"/><path d="M6 4.2H12.2V6.2H8.2V8H11.6V10H8.2V11.8H12.2V13.8H6Z" fill="#e8e8e8"/></svg>
<svg style="left:984.2px;top:106px" width="18" height="18" viewBox="0 0 18 18"><rect width="18" height="18" rx="2.4" fill="#1f1f1f"/><rect x="4.2" y="8.2" width="2.2" height="5.6" fill="#e8e8e8"/><rect x="7.9" y="4.2" width="2.2" height="9.6" fill="#e8e8e8"/><rect x="11.6" y="10.6" width="2.2" height="3.2" fill="#e8e8e8"/></svg>
<svg style="left:1016.2px;top:112.0px" width="11.8" height="6.9" viewBox="0 0 11.8 6.9"><path d="M0.665 0.665 L5.9 5.57 L11.135 0.665" fill="none" stroke="#1f1f1f" stroke-width="1.9" stroke-linecap="butt" stroke-linejoin="miter"/></svg>
<svg style="left:1044.8px;top:104.8px" width="22" height="20" viewBox="0 0 22 20"><path d="M0 3C0 1.3 3.2 0 7.4 0S14.8 1.3 14.8 3V4.4C14.8 6.1 11.6 7.4 7.4 7.4S0 6.1 0 4.4Z" fill="#777"/><path d="M0 6.6C1.4 8.1 4.2 8.8 7.4 8.8S13.4 8.1 14.8 6.6V8.4C13.6 8.4 11.4 9 10 10.8C9.2 11 8.4 11.2 7.4 11.2C3.2 11.2 0 10.6 0 8.9Z" fill="#777"/><path d="M0 11C1.4 12.5 4.2 13.2 7.4 13.2L8.8 13.2C8.6 14.2 8.7 15 9 16.2C8.5 16.3 8 16.3 7.4 16.3C3.2 16.3 0 15 0 13.3Z" fill="#777"/><circle cx="15.4" cy="14.2" r="5.6" fill="#777"/><path d="M12.6 14.2L14.6 16.2L18.2 12.4" fill="none" stroke="#dcdee3" stroke-width="1.5"/></svg>
<svg style="left:1083.6px;top:104.8px" width="22" height="20" viewBox="0 0 22 20"><path d="M0 3C0 1.3 3.2 0 7.4 0S14.8 1.3 14.8 3V4.4C14.8 6.1 11.6 7.4 7.4 7.4S0 6.1 0 4.4Z" fill="#777"/><path d="M0 6.6C1.4 8.1 4.2 8.8 7.4 8.8S13.4 8.1 14.8 6.6V8.4C13.6 8.4 11.4 9 10 10.8C9.2 11 8.4 11.2 7.4 11.2C3.2 11.2 0 10.6 0 8.9Z" fill="#777"/><path d="M0 11C1.4 12.5 4.2 13.2 7.4 13.2L8.8 13.2C8.6 14.2 8.7 15 9 16.2C8.5 16.3 8 16.3 7.4 16.3C3.2 16.3 0 15 0 13.3Z" fill="#777"/><circle cx="15.4" cy="14.2" r="5.6" fill="#777"/><path d="M15 11L12.2 13.4L15 15.8Z" fill="#dcdee3"/><path d="M14.6 13.4H16.2Q18.4 13.6 18.4 16.6" fill="none" stroke="#dcdee3" stroke-width="1.4"/></svg>
<svg style="left:1128.6px;top:107px" width="20" height="16" viewBox="0 0 20 16"><g stroke="#1f1f1f" stroke-width="2" fill="none"><path d="M6 2.2H19.6M6 8H19.6M6 13.8H19.6"/></g><g fill="#1f1f1f" font-family="'Liberation Sans',sans-serif" font-weight="bold" font-size="5.4" letter-spacing="0"><text x="0.4" y="4.2">1</text><text x="0.4" y="10">2</text><text x="0.4" y="15.8">3</text></g></svg>
<svg style="left:1153.2px;top:112.0px" width="11.8" height="6.9" viewBox="0 0 11.8 6.9"><path d="M0.665 0.665 L5.9 5.57 L11.135 0.665" fill="none" stroke="#1f1f1f" stroke-width="1.9" stroke-linecap="butt" stroke-linejoin="miter"/></svg>
<svg style="left:1192.6px;top:104.9px" width="20.4" height="20.4" viewBox="0 0 20.4 20.4"><circle cx="10.2" cy="10.2" r="10.2" fill="#1a1a1a"/><text x="10.2" y="16.2" text-anchor="middle" font-family="'Liberation Sans',sans-serif" font-weight="bold" font-size="17" letter-spacing="0" fill="#e8e8e8">?</text></svg>
<div class="t " style="left:412.40px;top:144.03px;color:#2c628e">Query</div>
<div class="abs" style="left:404px;top:165px;width:77px;height:2.2px;background:#2e5d84"></div>
<div class="t " style="left:489.00px;top:144.03px;">Query History</div>
<div class="hline" style="left:404px;top:167px;width:871px"></div>
<div class="vline" style="left:1074px;top:136px;height:238px;background:#c9ccd2"></div>
<div class="t " style="left:1083.60px;top:144.03px;color:#2c628e;width:120px;overflow:hidden">Scratch Pa</div>
<div class="abs" style="left:1203px;top:137px;width:72px;height:30px;background:#e8e8e8"></div>
<div class="abs" style="left:1075px;top:165px;width:128px;height:2.2px;background:#2e5d84"></div>
<div class="abs" style="left:404px;top:168px;width:38px;height:206px;background:#d6d8dd"></div>
<div class="abs" style="left:443px;top:168px;width:631px;height:206px;overflow:hidden">
<div class="t " style="left:5.20px;top:5.73px;"><span class="kw">CREATE TABLE</span> <span class="st">"EmployeesDepartments"</span><span class="pu">.</span><span class="st">"LOCATIONS"</span></div>
<div class="t " style="left:5.20px;top:33.73px;">    <span class="pu">(</span><span class="id">LOCATION_ID smallint</span> <span class="kw">GENERATED ALWAYS AS IDENTITY</span></div>
<div class="t " style="left:5.20px;top:61.73px;">     <span class="id">STREET_ADDRESS character varying</span><span class="pu">(</span><span class="nu">40</span><span class="pu">),</span></div>
<div class="t " style="left:5.20px;top:89.73px;">     <span class="id">POSTAL_CODE character varying</span><span class="pu">(</span><span class="nu">12</span><span class="pu">),</span></div>
<div class="t " style="left:5.20px;top:117.73px;">     <span class="id">CITY character varying</span><span class="pu">(</span><span class="nu">30</span><span class="pu">),</span></div>
<div class="t " style="left:5.20px;top:145.73px;">     <span class="id">COUNTRY_ID CHAR</span><span class="pu">(</span><span class="nu">2</span><span class="pu">)</span></div>
<div class="t " style="left:5.20px;top:173.73px;">    <span class="pu">);</span></div>
</div>
<div class="t " style="left:408.20px;top:173.73px;color:#707070">1</div>
<div class="t " style="left:408.20px;top:201.73px;color:#707070">2</div>
<div class="t " style="left:408.20px;top:229.73px;color:#707070">3</div>
<div class="t " style="left:408.20px;top:257.73px;color:#707070">4</div>
<div class="t " style="left:408.20px;top:285.73px;color:#707070">5</div>
<div class="t " style="left:408.20px;top:313.73px;color:#707070">6</div>
<div class="t " style="left:408.20px;top:341.73px;color:#707070">7</div>
<svg style="left:429px;top:183.5px" width="8" height="5" viewBox="0 0 8 5"><path d="M1 1L4 4L7 1" fill="none" stroke="#222" stroke-width="1.6"/></svg>
<svg style="left:1044.4px;top:143.8px" width="16.4" height="16.4" viewBox="0 0 16.4 16.4"><path d="M3.4 13L13 3.4" stroke="#1a1a1a" stroke-width="1.8"/><path d="M9.2 0.2H16.2V7.2Z M0.2 9.2V16.2H7.2Z" fill="#1a1a1a"/></svg>
<svg style="left:1245.4px;top:143.8px" width="16.4" height="16.4" viewBox="0 0 16.4 16.4"><path d="M3.4 13L13 3.4" stroke="#1a1a1a" stroke-width="1.8"/><path d="M9.2 0.2H16.2V7.2Z M0.2 9.2V16.2H7.2Z" fill="#1a1a1a"/></svg>
<svg style="left:1215.6px;top:152.0px" width="12.8" height="7.6" viewBox="0 0 12.8 7.6"><path d="M0.77 0.77 L6.4 6.06 L12.03 0.77" fill="none" stroke="#1f1f1f" stroke-width="2.2" stroke-linecap="butt" stroke-linejoin="miter"/></svg>
<svg style="left:1245.4px;top:381.6px" width="16.4" height="16.4" viewBox="0 0 16.4 16.4"><path d="M3.4 13L13 3.4" stroke="#1a1a1a" stroke-width="1.8"/><path d="M9.2 0.2H16.2V7.2Z M0.2 9.2V16.2H7.2Z" fill="#1a1a1a"/></svg>
<div class="hline" style="left:404px;top:374px;width:871px"></div>
<div class="t " style="left:412.60px;top:382.03px;">Data Output</div>
<div class="t " style="left:562.50px;top:382.03px;color:#2c628e">Messages</div>
<div class="abs" style="left:555px;top:403px;width:112.5px;height:2.2px;background:#2e5d84"></div>
<div class="t " style="left:675.60px;top:382.03px;">Notifications</div>
<div class="hline" style="left:404px;top:405px;width:871px"></div>
<div class="t " style="left:413.80px;top:411.43px;">CREATE TABLE</div>
<div class="t " style="left:413.80px;top:461.43px;">Query returned successfully in 486 msec.</div>
<div class="abs" style="left:404px;top:519px;width:871px;height:32px;background:#d6d8dd"></div>
<div class="hline" style="left:404px;top:518.5px;width:871px"></div>
<div class="t " style="left:416.00px;top:524.03px;">Total rows:</div>
<div class="t " style="left:575.30px;top:524.03px;">Query complete 00:00:00.486</div>
<div class="t " style="left:1068.00px;top:524.03px;">LF</div>
<div class="t " style="left:1117.60px;top:524.03px;">Ln 7, Col 7</div>
<div class="vline" style="left:562.5px;top:519px;height:32px;background:#c3c8d2"></div>
<div class="vline" style="left:916.5px;top:519px;height:32px;background:#c3c8d2"></div>
<div class="vline" style="left:1104px;top:519px;height:32px;background:#c3c8d2"></div>
</body></html>
